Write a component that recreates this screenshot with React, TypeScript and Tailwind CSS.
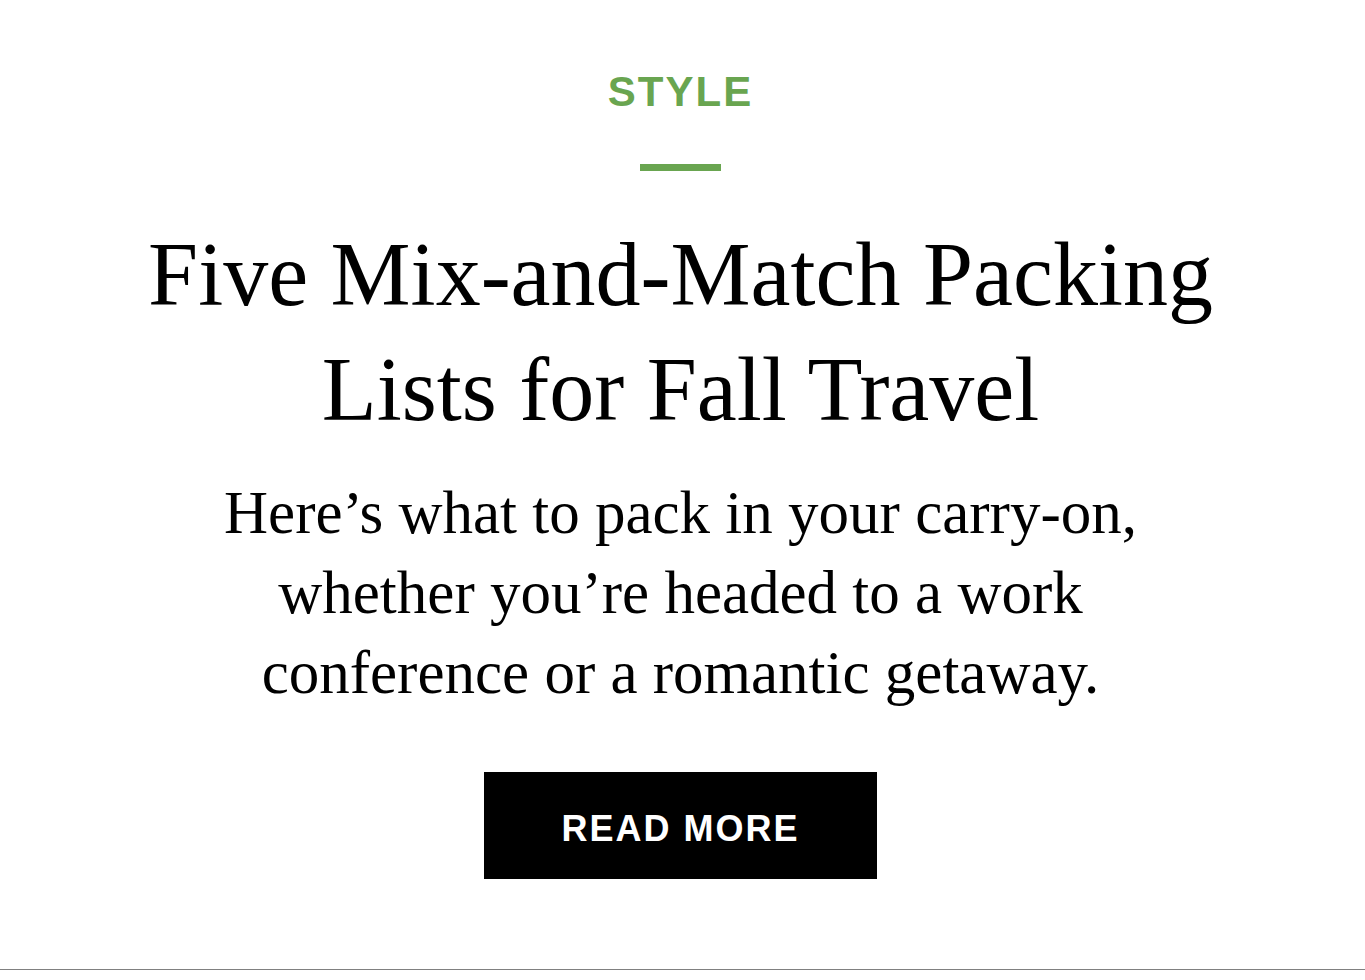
import React from "react";

export default function App() {
  return (
    <div className="min-h-[980px] bg-white">
      <section className="flex h-[970px] flex-col items-center border-b border-[#808080] pr-1 pt-[71px] text-center">
        {/* category label */}
        <p className="font-['Liberation_Sans',Arial,sans-serif] text-[42px] font-bold leading-none tracking-[2px] text-[#69a550]">
          STYLE
        </p>
        <div className="mt-[51px] h-[7px] w-[81px] bg-[#69a550]" />

        <h1 className="mt-[46px] max-w-[1100px] font-['Liberation_Serif','Times_New_Roman',serif] text-[90px] leading-[115px] text-black">
          Five Mix-and-Match Packing Lists for Fall Travel
        </h1>

        <p className="mt-[26px] max-w-[950px] font-['Liberation_Serif','Times_New_Roman',serif] text-[61px] leading-[80px] text-black">
          Here’s what to pack in your carry-on, whether you’re headed to a work conference or a romantic getaway.
        </p>

        <a
          href="#"
          className="mt-[59px] flex h-[107px] w-[393px] items-center justify-center bg-black pt-[6px] font-['Liberation_Sans',Arial,sans-serif] text-[36px] font-bold leading-none tracking-[2px] text-white"
        >
          READ MORE
        </a>
      </section>
    </div>
  );
}
